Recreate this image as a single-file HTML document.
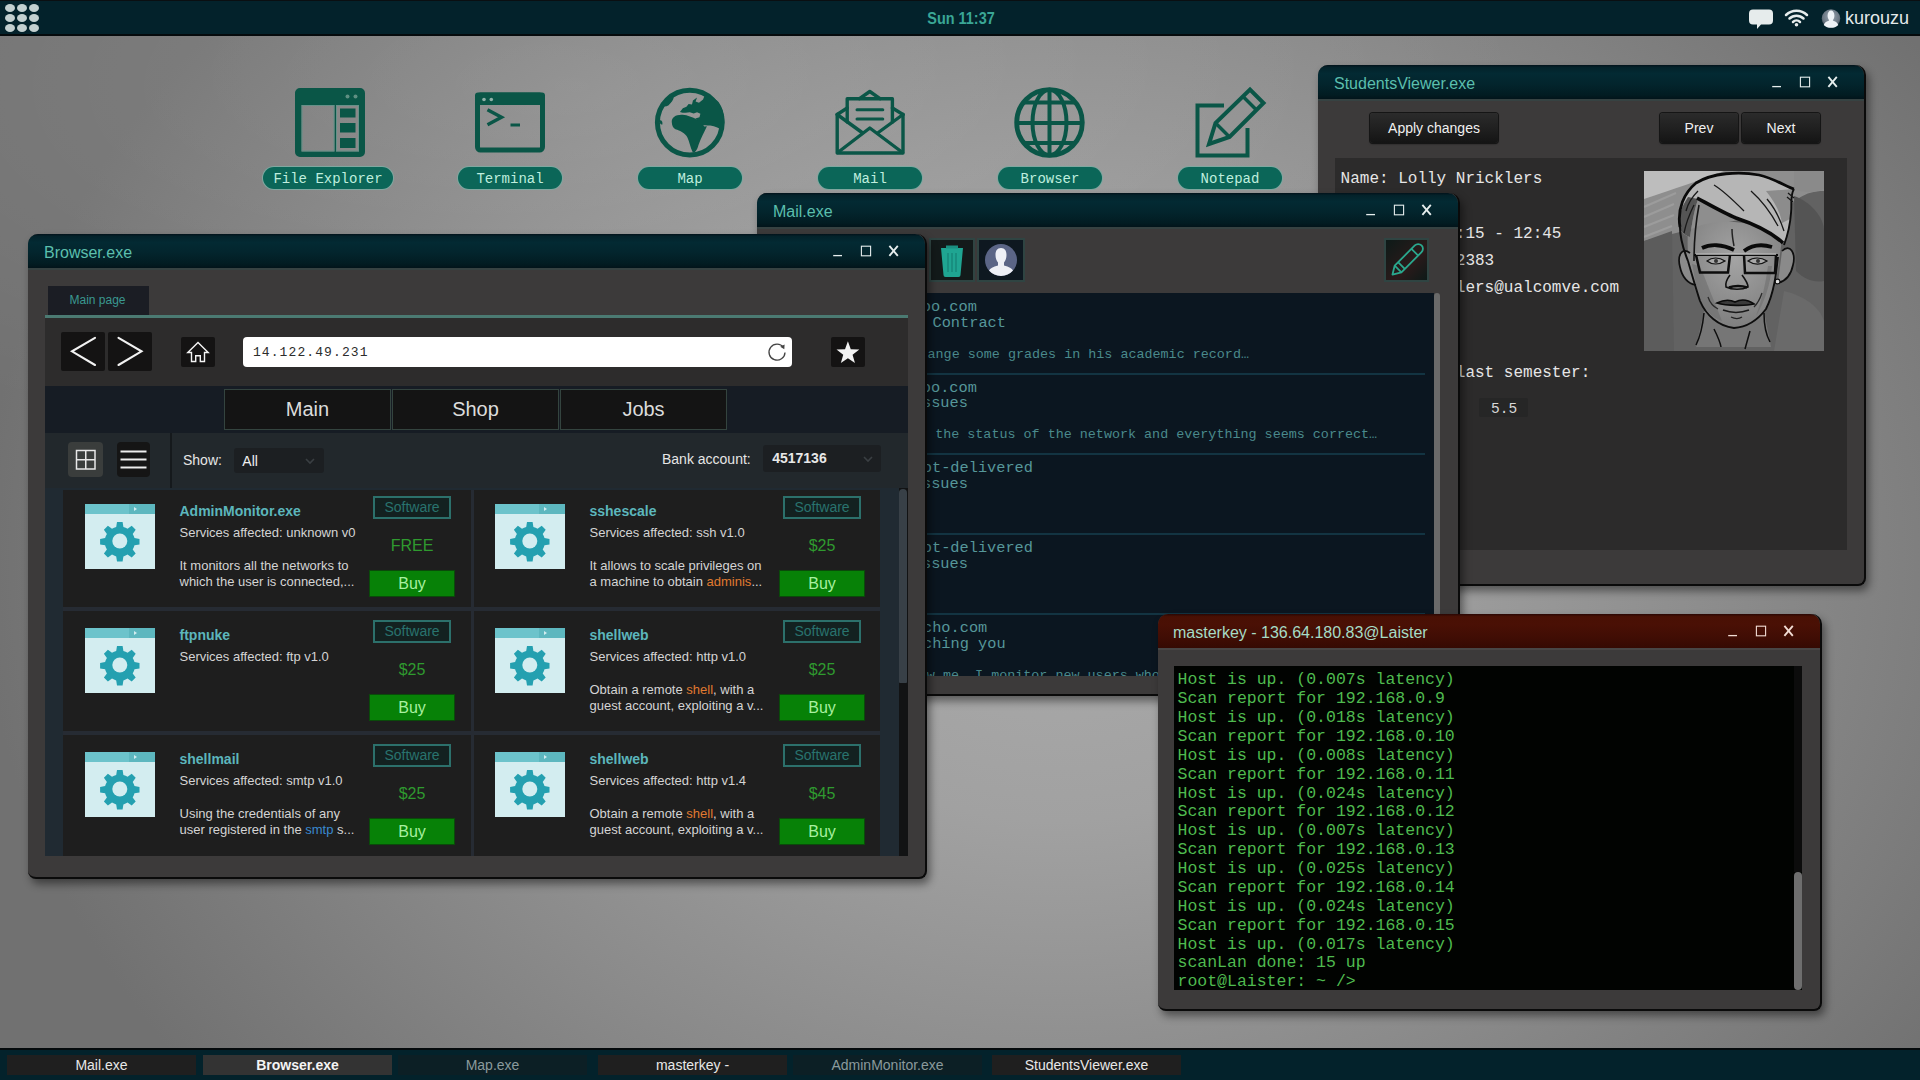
<!DOCTYPE html>
<html><head><meta charset="utf-8">
<style>
*{margin:0;padding:0;box-sizing:border-box}
html,body{width:1920px;height:1080px;overflow:hidden}
body{position:relative;font-family:"Liberation Sans",sans-serif;background:#8c8c8c}
.abs{position:absolute}
#bg{position:absolute;left:0;top:0;width:1920px;height:1080px;
 background:radial-gradient(ellipse 50% 36% at 30% 8%,rgba(255,255,255,.12),rgba(255,255,255,0) 100%),radial-gradient(ellipse 56% 80% at 55% 52%,#ababab 0%,#a1a1a1 30%,#8b8b8b 63%,#717171 100%)}
#topbar{position:absolute;left:0;top:0;width:1920px;height:36px;background:#03222b;border-top:1px solid #0a0f12;border-bottom:2px solid #050a0c}
#taskbar{position:absolute;left:0;top:1048px;width:1920px;height:32px;background:#03222b;border-top:2px solid #050a0c}
.tb{position:absolute;top:4.5px;height:20.5px;width:189px;font-size:14px;line-height:21px;text-align:center;color:#e8e8e8}
.dicon{position:absolute;top:86px;width:72px;height:72px}
.pill{position:absolute;top:167px;height:22px;width:104px;border-radius:11px;background:#0b6658;box-shadow:0 0 0 1px #7fa8a0;
 font-family:"Liberation Mono",monospace;font-size:14px;line-height:24px;text-align:center;color:#bfeede}
.win{position:absolute;background:#3c3a3a;border-radius:10px 10px 8px 8px;border-right:2.5px solid #0a0a0a;border-bottom:2.5px solid #0a0a0a;box-shadow:3px 5px 9px rgba(0,0,0,.45)}
.title{position:absolute;left:0;top:0;right:0;height:34px;border-radius:10px 10px 0 0;
 background:linear-gradient(to bottom,#02121a 0%,#03222a 7%,#032a33 25%,#03252d 55%,#021c22 88%,#02141a 100%);box-shadow:0 2px 0 #364242;
 font-size:16px;color:#5bbfad;line-height:34px;padding-left:16px}
.ctl{position:absolute;top:0;height:34px;color:#e8f0f0}
</style><style>
.btn{border-radius:3px;background:linear-gradient(to bottom,#2b2b2b 0%,#1e1e1e 60%,#141414 100%);box-shadow:0 0 0 1px #151515,0 1px 2px rgba(0,0,0,.6);
 color:#f0f0f0;font-size:14px;line-height:30px;text-align:center}
.mono16{font-family:"Liberation Mono",monospace;font-size:16px;line-height:20px;color:#e6e6e6;white-space:pre}
.card{width:407px;height:113px;background:#1e1e1e}
.ctitle{font-size:14px;font-weight:bold;color:#5cb6bc;line-height:17px;white-space:nowrap}
.ctext{font-size:13px;color:#d4d4d4;line-height:16px;white-space:nowrap}
.tag{width:78px;height:23px;border:2px solid #2c706b;background:#132120;color:#29736e;font-size:14px;line-height:19px;text-align:center}
.price{width:84px;height:22px;font-size:16px;line-height:22px;text-align:center;color:#2f9a2f}
.buy{width:84px;height:25px;background:#078107;box-shadow:0 0 0 1px #0a4a0a;color:#a8f0a0;font-size:16px;line-height:25px;text-align:center}
.nbtn{background:#141313;border-radius:2px}
.navtab{width:167px;height:41px;background:#141414;border:1px solid #34443f;color:#dcdcdc;font-size:20px;line-height:39px;text-align:center}
.term{font-family:"Liberation Mono",monospace;font-size:16.5px;line-height:18.88px;color:#4fba4f;white-space:pre}
.tbtn{background:#131a1a;box-shadow:0 0 0 2px #2f4442}
</style>
</head><body>
<div id="bg"></div>

<!-- TOP BAR -->
<div id="topbar">
 <svg class="abs" style="left:0;top:-1px" width="50" height="36">
  <g fill="#c3d0d0">
   <ellipse cx="10" cy="8" rx="5" ry="4"/><ellipse cx="22" cy="8" rx="5" ry="4"/><ellipse cx="34" cy="8" rx="5" ry="4"/>
   <ellipse cx="10" cy="18" rx="5" ry="4"/><ellipse cx="22" cy="18" rx="5" ry="4"/><ellipse cx="34" cy="18" rx="5" ry="4"/>
   <ellipse cx="10" cy="28" rx="5" ry="4"/><ellipse cx="22" cy="28" rx="5" ry="4"/><ellipse cx="34" cy="28" rx="5" ry="4"/>
  </g>
 </svg>
 <div class="abs" style="left:915px;top:5.5px;width:92px;height:24px;font-size:17px;font-weight:bold;line-height:24px;color:#3aa696;text-align:center;transform:scaleX(0.85)">Sun 11:37</div>
 <svg class="abs" style="left:1740px;top:-1px" width="110" height="36">
  <path d="M13,9.5 h16 a4,4 0 0 1 4,4 v7 a4,4 0 0 1 -4,4 h-8 l-4,4.5 l0,-4.5 h-4 a4,4 0 0 1 -4,-4 v-7 a4,4 0 0 1 4,-4z" fill="#e6ecec"/>
  <g fill="none" stroke="#e6ecec" stroke-width="2.5" stroke-linecap="round">
   <path d="M46,15 a15,15 0 0 1 21,0"/><path d="M49.5,18.5 a10,10 0 0 1 14,0"/><path d="M53,22 a5,5 0 0 1 7,0"/>
  </g>
  <circle cx="56.5" cy="24.8" r="1.8" fill="#e6ecec"/>
  <defs><radialGradient id="ug" cx="50%" cy="40%" r="60%"><stop offset="0" stop-color="#9aa6b2"/><stop offset="0.75" stop-color="#6a7682"/><stop offset="1" stop-color="#3a4650"/></radialGradient></defs>
  <circle cx="91" cy="18.5" r="9.3" fill="url(#ug)"/>
  <path d="M89.2,20.5 c-2.5,0.8 -4.5,1.8 -5.5,4.5 c2,2 4.5,2.8 7.3,2.8 c2.8,0 5.3,-0.8 7.3,-2.8 c-1,-2.7 -3,-3.7 -5.5,-4.5 c1,-1.5 1.6,-3 1.6,-5 c0,-3 -1.4,-5 -3.4,-5 c-2,0 -3.4,2 -3.4,5 c0,2 0.6,3.5 1.6,5z" fill="#eef2f6"/>
 </svg>
 <div class="abs" style="left:1845px;top:5px;font-size:18px;line-height:24px;color:#e4eaea">kurouzu</div>
</div>

<!-- DESKTOP ICONS -->
<svg class="abs" style="left:0;top:0" width="1320" height="200">
 <g fill="#0a5647" stroke="none">
  <!-- file explorer -->
  <path fill-rule="evenodd" d="M300,88 h60 a5,5 0 0 1 5,5 v59 a5,5 0 0 1 -5,5 h-60 a5,5 0 0 1 -5,-5 v-59 a5,5 0 0 1 5,-5z
   M301.5,105 v46.5 h33 v-46.5z M336,105 v46.5 h23 v-46.5z"/>
  <rect x="340" y="108.5" width="15.5" height="9" /><rect x="340" y="123" width="15.5" height="9.5"/><rect x="340" y="138" width="15.5" height="10"/>
  <circle cx="347.5" cy="96.5" r="2" fill="#5f8f82"/><circle cx="355.5" cy="96.5" r="2" fill="#5f8f82"/>
 </g>
 <g fill="none" stroke="#5f948a" stroke-width="1" opacity="0.8">
  <rect x="302" y="105.5" width="32" height="45.5"/><rect x="336.5" y="105.5" width="22" height="45.5"/>
 </g>
 <!-- terminal -->
 <g fill="none" stroke="#0a5647">
  <rect x="477.5" y="95" width="65" height="55" rx="3" stroke-width="5"/>
  <path d="M487.5,109.8 L501.5,117.3 L487.5,124.8" stroke-width="3.4"/>
  <path d="M510.5,125 H520" stroke-width="3"/>
 </g>
 <rect x="475" y="92.5" width="70" height="12.5" rx="3" fill="#0a5647"/>
 <circle cx="484" cy="99.5" r="1.8" fill="#8fb0a8"/><circle cx="491.3" cy="99.5" r="1.8" fill="#8fb0a8"/>
 <!-- map globe -->
 <circle cx="689.8" cy="122.6" r="32.4" fill="none" stroke="#0a5647" stroke-width="5"/>
 <g fill="#0a5647" transform="translate(620,70) scale(0.12038)">
  <path d="M430,432 C428,392 468,368 520,372 C562,376 600,392 640,412 C668,428 688,450 700,470 L722,468 C700,520 672,566 652,622 C642,660 626,688 604,684 C584,642 576,592 560,560 C540,522 500,504 460,492 C440,482 432,462 430,432 Z"/>
  <path d="M498,348 L522,318 L552,306 L570,282 L598,286 L606,254 L640,228 L628,262 L656,272 L690,246 L702,214 C740,214 790,236 820,268 C850,310 866,360 866,420 C866,450 862,480 852,504 C830,484 790,470 750,462 C720,458 700,456 682,462 C668,440 650,420 626,402 L660,392 L668,364 L640,352 L612,362 L580,352 C550,358 520,356 498,348 Z"/>
  <path d="M352,300 C358,262 390,232 442,214 C454,232 434,262 404,292 C388,302 370,306 352,300 Z"/>
  <path d="M328,418 C344,412 356,428 352,452 C340,458 330,448 328,418 Z"/>
 </g>
 <!-- mail -->
 <g fill="none" stroke="#0a5647" stroke-width="3.4" stroke-linejoin="round" stroke-linecap="round">
  <path d="M859.5,98.7 L869.8,91.5 L880,98.7"/>
  <path d="M847.2,122 V98.7 H892.4 V122"/>
  <path d="M857,109.8 H882.8 M857,119 H882.8" stroke-width="3"/>
  <path d="M837.2,114.5 V153 H903 V114.5"/>
  <path d="M837.2,114.5 L847.2,108 M903,114.5 L892.4,108"/>
  <path d="M837.2,114.5 L862,132.5 M903,114.5 L878.3,132.5"/>
  <path d="M837.8,152.5 L869.8,128 L902.5,152.5"/>
 </g>
 <!-- browser globe -->
 <g fill="none" stroke="#0a5647">
  <circle cx="1049.5" cy="122.5" r="32.8" stroke-width="4.8"/>
  <ellipse cx="1049.5" cy="122.5" rx="17" ry="32.8" stroke-width="4"/>
  <path d="M1049.5,90 V155 M1017,123 H1082 M1025,102.5 H1074 M1025,143 H1074" stroke-width="4"/>
 </g>
 <!-- notepad -->
 <g fill="none" stroke="#0a5647" stroke-width="4">
  <path d="M1224,105.5 H1197.5 V155.5 H1247.5 V128"/>
  <path d="M1209,144 L1215.5,123 L1250,89.5 L1263.5,103 L1229.5,137 Z" stroke-linejoin="miter"/>
  <path d="M1215.5,123 L1229.5,137 M1243,96.5 L1256.5,110" stroke-width="3.5"/>
 </g>
</svg>
<div class="pill" style="left:263px;width:130px">File Explorer</div>
<div class="pill" style="left:458px">Terminal</div>
<div class="pill" style="left:638px">Map</div>
<div class="pill" style="left:818px">Mail</div>
<div class="pill" style="left:998px">Browser</div>
<div class="pill" style="left:1178px">Notepad</div>

<div class="win" style="left:1318px;top:65px;width:547.5px;height:520.5px">
<div class="title" style="padding-left:16px;height:34px;line-height:34px"><span style="position:relative;top:1.5px">StudentsViewer.exe</span><svg class="abs" style="left:445px;top:0" width="90" height="34">
 <path d="M9.2,21.6 H18" stroke="#e6eeee" stroke-width="1.3"/>
 <rect x="37.4" y="12.2" width="9.2" height="9.6" fill="none" stroke="#e6eeee" stroke-width="1.1"/>
 <path d="M65.4,11.9 L73.8,21.9 M73.8,11.9 L65.4,21.9" stroke="#e6eeee" stroke-width="1.85"/>
</svg></div>

<div class="abs btn" style="left:52px;top:48px;width:128px;height:30px">Apply changes</div>
<div class="abs btn" style="left:342px;top:48px;width:78px;height:30px">Prev</div>
<div class="abs btn" style="left:424px;top:48px;width:78px;height:30px">Next</div>
<div class="abs" style="left:17px;top:92.5px;width:512px;height:392.5px;background:#2c2b2b"></div>
<div class="abs mono16" style="left:22.6px;top:104px">Name: Lolly Nricklers</div>
<div class="abs mono16" style="left:22.6px;top:159px">Schedule: 12:15 - 12:45</div>
<div class="abs mono16" style="left:22.6px;top:186px">Phone: 555552383</div>
<div class="abs mono16" style="left:22.6px;top:213px">Mail: lnricklers@ualcomve.com</div>
<div class="abs mono16" style="left:22.6px;top:298px">Grades from last semester:</div>
<div class="abs" style="left:161px;top:333px;width:49px;height:19px;background:#262626;border-radius:2px"></div>
<div class="abs" style="left:173px;top:334.5px;font-family:'Liberation Mono',monospace;font-size:14.5px;line-height:19px;color:#d8d8d8">5.5</div>
<svg class="abs" style="left:326px;top:106px" width="180" height="180" viewBox="0 0 180 180">
 <defs>
  <radialGradient id="pface" cx="0.5" cy="0.35" r="0.7">
   <stop offset="0" stop-color="#a4a4a4"/><stop offset="1" stop-color="#7c7c7c"/>
  </radialGradient>
 </defs>
 <rect width="180" height="180" fill="#626262"/>
 <path d="M0,0 H180 V20 C160,20 150,30 140,40 L40,60 L0,70 Z" fill="#8e8e8e"/>
 <path d="M0,0 H80 C60,8 30,18 0,28 Z" fill="#bdbdbd"/>
 <path d="M150,0 H180 V18 C170,22 160,22 150,18 Z" fill="#8a8a8a"/>
 <g stroke="#a8a8a8" stroke-width="2.2" opacity="0.55">
  <path d="M0,36 L32,22 M0,46 L30,33 M0,56 L30,44 M0,66 L28,55 M2,76 L26,66"/>
 </g>
 <path d="M0,70 L28,60 L30,180 H0 Z" fill="#5c5c5c"/>
 <path d="M150,25 C165,30 180,45 180,60 V110 C170,112 160,108 152,100 Z" fill="#545454"/>
 <path d="M140,120 C160,125 175,135 180,150 V180 H130 Z" fill="#6a6a6a"/>
 <!-- neck -->
 <path d="M60,140 L52,176 H127 L120,140 Z" fill="#767676"/>
 <!-- face -->
 <path d="M44,60 C42,90 48,112 56,130 C64,146 76,156 90,157 C106,156 118,146 124,136 C132,118 134,98 138,68 C118,50 70,44 44,60 Z" fill="url(#pface)"/>
 <path d="M44,92 C46,110 52,125 60,136 C66,144 72,148 78,150 C70,130 62,110 56,95 Z" fill="#6e6e6e" opacity="0.6"/>
 <path d="M128,95 C126,115 120,132 112,145 C118,128 122,112 124,95 Z" fill="#6a6a6a" opacity="0.5"/>
 <!-- ears -->
 <path d="M46,82 C38,76 33,84 36,96 C38,106 44,113 52,114" fill="#8a8a8a" stroke="#0e0e0e" stroke-width="1.7"/>
 <path d="M138,80 C146,72 152,82 149,94 C147,104 142,110 134,112" fill="#8a8a8a" stroke="#0e0e0e" stroke-width="1.7"/>
 <circle cx="133.5" cy="110.5" r="2.4" fill="#e0e0e0" stroke="#111" stroke-width="1.1"/>
 <!-- hair -->
 <path d="M35,55 C33,38 40,22 52,12 C68,2 95,0 115,4 C132,8 142,16 150,18 C146,22 148,32 147,42 C146,56 143,66 140,72 C128,62 110,55 92,48 C78,42 64,34 54,28 C50,40 48,52 46,66 C40,64 36,60 35,55 Z" fill="#b6b6b6"/>
 <path d="M54,28 C50,40 48,52 46,66 C40,64 36,60 35,55 C34,45 38,35 44,26 Z" fill="#555"/>
 <path d="M122,20 C130,30 136,40 138,52 L146,48 C146,36 148,26 150,18 Z" fill="#8c8c8c"/>
 <path d="M53,27 C66,34 80,42 92,47 C110,53 126,60 139,72" fill="none" stroke="#0a0a0a" stroke-width="3.6"/>
 <path d="M36,56 C33,38 40,22 52,12 C68,2 95,0 115,4 C132,8 142,16 150,18" fill="none" stroke="#0a0a0a" stroke-width="2.8"/>
 <path d="M150,18 C146,24 148,32 147,42 C146,56 143,66 140,74" fill="none" stroke="#0d0d0d" stroke-width="1.9"/>
 <path d="M36,56 C36,68 40,80 44,90" fill="none" stroke="#0d0d0d" stroke-width="2"/>
 <g fill="none" stroke="#181818" stroke-width="1.3">
  <path d="M107,20 C116,28 126,40 134,55"/><path d="M123,28 C130,36 136,48 140,60"/><path d="M70,14 C80,20 90,30 100,40"/>
  <path d="M42,40 C44,32 48,26 54,20"/><path d="M40,62 C42,52 46,42 50,34"/><path d="M144,22 L150,27 M143,26 L149,31"/>
 </g>
 <path d="M55,34 C52,50 50,70 50,90" fill="none" stroke="#151515" stroke-width="1.6"/>
 <!-- face outline -->
 <path d="M44,90 C48,104 52,118 56,130 C62,144 74,155 90,157 C106,156 116,146 122,138 C130,122 132,104 134,86" fill="none" stroke="#0e0e0e" stroke-width="1.9"/>
 <!-- neck lines -->
 <path d="M60,142 C59,152 57,164 52,174 M120,142 C120,152 121,162 126,171 M70,158 C73,164 76,170 77,176 M106,160 L101,178" fill="none" stroke="#0e0e0e" stroke-width="1.5"/>
 <!-- forehead crease -->
 <path d="M88,58 C88,64 89,70 90,75" fill="none" stroke="#222" stroke-width="1.5"/>
 <!-- brows -->
 <path d="M58,77 C66,73 78,73 90,79" fill="none" stroke="#0a0a0a" stroke-width="3.8"/>
 <path d="M100,80 C108,74 118,73 128,76" fill="none" stroke="#0a0a0a" stroke-width="3.8"/>
 <!-- glasses -->
 <g fill="none" stroke="#0d0d0d">
  <path d="M50,84 H134" stroke-width="1.8"/>
  <path d="M52,84 L56,101.5 H84 L86,84" stroke-width="2.5"/>
  <path d="M100,84 L101,102 H131 L132,84" stroke-width="2.5"/>
 </g>
 <path d="M52,83.2 H132" stroke="#e4e4e4" stroke-width="0.9"/>
 <!-- eyes -->
 <path d="M63,90 C68,86 75,86 81,90 C75,94 68,94 63,90 Z" fill="#a8a8a8" stroke="#111" stroke-width="1.2"/>
 <path d="M104,90 C109,86 117,86 123,90 C117,94 110,94 104,90 Z" fill="#a8a8a8" stroke="#111" stroke-width="1.2"/>
 <circle cx="72" cy="90" r="2" fill="#333"/><circle cx="114" cy="90" r="2" fill="#333"/>
 <!-- nose -->
 <path d="M86,104 C83,108 81,112 82,116 C88,119 98,119 104,116 C104,112 101,108 98,104" fill="none" stroke="#111" stroke-width="1.6"/>
 <path d="M85,116.5 C90,114.5 98,114.5 103,116.5" fill="none" stroke="#0e0e0e" stroke-width="2.6"/>
 <!-- mouth -->
 <path d="M73,132 C81,128 87,129 91,131 C97,128 103,128 110,133 C102,135 83,135 73,132 Z" fill="#3a3a3a" stroke="#0a0a0a" stroke-width="1.6"/>
 <path d="M79,139 C87,142 97,142 105,139" fill="none" stroke="#1a1a1a" stroke-width="1.6"/>
 <path d="M64,126 C66,132 70,136 74,138 M118,122 C116,128 113,133 110,136" fill="none" stroke="#2a2a2a" stroke-width="1.3"/>
 <path d="M87,146 C91,148 95,148 98,146" fill="none" stroke="#222" stroke-width="1.3"/>

</svg>

</div>
<div class="win" style="left:757px;top:193px;width:702.5px;height:502.5px">
<div class="title" style="padding-left:16px;height:34px;line-height:34px"><span style="position:relative;top:1.5px">Mail.exe</span><svg class="abs" style="left:600px;top:0" width="90" height="34">
 <path d="M9.2,21.6 H18" stroke="#e6eeee" stroke-width="1.3"/>
 <rect x="37.4" y="12.2" width="9.2" height="9.6" fill="none" stroke="#e6eeee" stroke-width="1.1"/>
 <path d="M65.4,11.9 L73.8,21.9 M73.8,11.9 L65.4,21.9" stroke="#e6eeee" stroke-width="1.85"/>
</svg></div>

<div class="abs tbtn" style="left:174px;top:47px;width:42px;height:40px">
 <svg class="abs" style="left:8px;top:4px" width="26" height="33" viewBox="0 0 26 33">
  <path d="M2,4 h22 l-2.5,27 a2,2 0 0 1 -2,2 h-13 a2,2 0 0 1 -2,-2z" fill="#1fa592"/>
  <path d="M7,1.5 h12 v3 h-12z" fill="#1a8f80"/>
  <path d="M9,9 v19 M13,9 v19 M17,9 v19" stroke="#178a7c" stroke-width="1.6"/>
 </svg>
</div>
<div class="abs tbtn" style="left:222px;top:47px;width:44px;height:40px;background:#0e1820">
 <svg class="abs" style="left:4px;top:2px" width="36" height="36" viewBox="0 0 36 36">
  <circle cx="18" cy="18" r="16" fill="#5b6586"/>
  <path d="M18,6 c-4,0 -5.5,3 -5.5,7 c0,3 1,5.5 2.5,7.5 l0,3 c-5,1 -8,3 -9,5 a16,16 0 0 0 24,0 c-1,-2 -4,-4 -9,-5 l0,-3 c1.5,-2 2.5,-4.5 2.5,-7.5 c0,-4 -1.5,-7 -5.5,-7z" fill="#eef0f6"/>
 </svg>
</div>
<div class="abs tbtn" style="left:629px;top:47px;width:41px;height:40px;background:linear-gradient(135deg,#0d1a18,#2a1a1a 60%,#0d1a18)">
 <svg class="abs" style="left:2px;top:1px" width="38" height="38" viewBox="0 0 34 34">
  <g fill="none" stroke="#2aa88e" stroke-width="1.6" stroke-linejoin="round">
   <path d="M4,30 L6,22 L24,4 a3.5,3.5 0 0 1 6,6 L12,28 Z"/>
   <path d="M6,22 L12,28 M21,7 L27,13 M9,19 L15,25"/>
  </g>
 </svg>
</div>
<div class="abs" style="left:16px;top:100px;width:661px;height:383px;background:#0b1620;overflow:hidden">
<div class="abs" style="left:0;top:79.5px;width:652px;height:2.5px;background:#133442"></div><div class="abs" style="left:0;top:159.5px;width:652px;height:2.5px;background:#133442"></div><div class="abs" style="left:0;top:239.5px;width:652px;height:2.5px;background:#133442"></div><div class="abs" style="left:0;top:319.5px;width:652px;height:2.5px;background:#133442"></div><div class="abs" style="left:0;top:399.5px;width:652px;height:2.5px;background:#133442"></div><div class="abs" style="left:57.02px;top:6.33px;font-family:'Liberation Mono',monospace;font-size:15.3px;line-height:17.59px;color:#56979a;white-space:pre">hacker@yahoo.com</div><div class="abs" style="left:122.78px;top:22.23px;font-family:'Liberation Mono',monospace;font-size:15.3px;line-height:17.59px;color:#56979a;white-space:pre">Job Contract</div><div class="abs" style="left:-6.20px;top:53.72px;font-family:'Liberation Mono',monospace;font-size:13.4px;line-height:15.41px;color:#4a8a8c;white-space:pre">Hi, I need you to change some grades in his academic record…</div><div class="abs" style="left:66.20px;top:86.53px;font-family:'Liberation Mono',monospace;font-size:15.3px;line-height:17.59px;color:#56979a;white-space:pre">admin@yahoo.com</div><div class="abs" style="left:66.40px;top:102.43px;font-family:'Liberation Mono',monospace;font-size:15.3px;line-height:17.59px;color:#56979a;white-space:pre">Network issues</div><div class="abs" style="left:81.80px;top:133.92px;font-family:'Liberation Mono',monospace;font-size:13.4px;line-height:15.41px;color:#4a8a8c;white-space:pre">I checked the status of the network and everything seems correct…</div><div class="abs" style="left:94.74px;top:166.73px;font-family:'Liberation Mono',monospace;font-size:15.3px;line-height:17.59px;color:#56979a;white-space:pre">Mail not-delivered</div><div class="abs" style="left:66.40px;top:182.63px;font-family:'Liberation Mono',monospace;font-size:15.3px;line-height:17.59px;color:#56979a;white-space:pre">Network issues</div><div class="abs" style="left:94.74px;top:246.93px;font-family:'Liberation Mono',monospace;font-size:15.3px;line-height:17.59px;color:#56979a;white-space:pre">Mail not-delivered</div><div class="abs" style="left:66.40px;top:262.83px;font-family:'Liberation Mono',monospace;font-size:15.3px;line-height:17.59px;color:#56979a;white-space:pre">Network issues</div><div class="abs" style="left:58.22px;top:327.13px;font-family:'Liberation Mono',monospace;font-size:15.3px;line-height:17.59px;color:#56979a;white-space:pre">someone@yacho.com</div><div class="abs" style="left:122.48px;top:343.03px;font-family:'Liberation Mono',monospace;font-size:15.3px;line-height:17.59px;color:#56979a;white-space:pre">Watching you</div><div class="abs" style="left:97.64px;top:374.52px;font-family:'Liberation Mono',monospace;font-size:13.4px;line-height:15.41px;color:#4a8a8c;white-space:pre">You know me. I monitor new users who register</div>
</div>
<div class="abs" style="left:677px;top:100px;width:6px;height:383px;background:#6a6a6a;border-radius:3px"></div>

</div>
<div class="win" style="left:28px;top:234px;width:898.5px;height:644.5px">
<div class="title" style="padding-left:16px;height:34px;line-height:34px"><span style="position:relative;top:1.5px">Browser.exe</span><svg class="abs" style="left:796px;top:0" width="90" height="34">
 <path d="M9.2,21.6 H18" stroke="#e6eeee" stroke-width="1.3"/>
 <rect x="37.4" y="12.2" width="9.2" height="9.6" fill="none" stroke="#e6eeee" stroke-width="1.1"/>
 <path d="M65.4,11.9 L73.8,21.9 M73.8,11.9 L65.4,21.9" stroke="#e6eeee" stroke-width="1.85"/>
</svg></div>
<div class="abs" style="left:17px;top:84px;width:863px;height:538px;background:#2d2c2c"></div><div class="abs" style="left:20px;top:51.5px;width:101px;height:29px;background:#1b1d24;color:#3a9890;font-size:12px;line-height:29px;padding-left:21.5px">Main page</div><div class="abs" style="left:17px;top:81px;width:863px;height:3px;background:#4b7a72"></div><div class="abs nbtn" style="left:33.4px;top:98px;width:44px;height:39px"><svg width="44" height="39"><path d="M34,5.8 L11,19.3 L34,33" fill="none" stroke="#f2f2f2" stroke-width="2.1" stroke-linecap="round"/></svg></div>
<div class="abs nbtn" style="left:80.3px;top:98px;width:44px;height:39px"><svg width="44" height="39"><path d="M10.5,5.8 L33.5,19.3 L10.5,33" fill="none" stroke="#f2f2f2" stroke-width="2.1" stroke-linecap="round"/></svg></div>
<div class="abs nbtn" style="left:153.4px;top:103px;width:34px;height:30px"><svg width="34" height="30"><path d="M6.8,15.5 L17,5.5 L27.2,15.5 H23.5 V24.5 H19.3 V18.7 H14.7 V24.5 H10.5 V15.5 Z" fill="none" stroke="#f4f4f4" stroke-width="1.4"/></svg></div>
<div class="abs" style="left:215.4px;top:103.4px;width:549px;height:30px;background:#fff;border-radius:4px"></div>
<div class="abs" style="left:224.9px;top:111px;font-family:'Liberation Mono',monospace;font-size:13px;line-height:16px;letter-spacing:1.1px;color:#2c2c2c">14.122.49.231</div>
<svg class="abs" style="left:737.5px;top:106.3px" width="22" height="22"><path d="M17.5,7.5 A8,8 0 1 0 19,12.5" fill="none" stroke="#444" stroke-width="1.3"/><path d="M14.2,6.8 L18.6,4.5 L18.3,9.3 Z" fill="#444"/></svg>
<div class="abs nbtn" style="left:802.6px;top:103px;width:34px;height:30px"><svg width="34" height="30"><path d="M16.90,4.30 L19.78,12.34 L28.31,12.59 L21.56,17.81 L23.95,26.01 L16.90,21.20 L9.85,26.01 L12.24,17.81 L5.49,12.59 L14.02,12.34 Z" fill="#f2f2f2"/></svg></div>
<div class="abs" style="left:17px;top:151.5px;width:863px;height:47px;background:#161c24"></div><div class="abs navtab" style="left:196px;top:155px">Main</div><div class="abs navtab" style="left:364px;top:155px">Shop</div><div class="abs navtab" style="left:532px;top:155px">Jobs</div><div class="abs" style="left:17px;top:198.5px;width:863px;height:55.5px;background:#22282c"></div><div class="abs" style="left:40px;top:208px;width:34.5px;height:34.5px;background:#3a3d3c;border-radius:4px"><svg width="35" height="35"><path d="M8.5,8.5 H27 V27 H8.5 Z M17.75,8.5 V27 M8.5,17.75 H27" fill="none" stroke="#e8e8e8" stroke-width="1.5"/></svg></div>
<div class="abs" style="left:89px;top:208px;width:33px;height:34.5px;background:#151515;border-radius:4px"><svg width="33" height="35"><path d="M3.5,9.5 H29.5 M3.5,17.5 H29.5 M3.5,25.5 H29.5" stroke="#ececec" stroke-width="2"/></svg></div>
<div class="abs" style="left:142px;top:198.5px;width:2px;height:55.5px;background:#15191c"></div>
<div class="abs" style="left:155px;top:217px;font-size:14px;line-height:18px;color:#e6e6e6">Show:</div>
<div class="abs" style="left:205.8px;top:213.6px;width:90px;height:25px;background:#1c1f22;border-radius:3px;color:#f0f0f0;font-size:14px;line-height:26px;padding-left:8.5px">All<svg class="abs" style="left:70px;top:8px" width="12" height="10"><path d="M2,3 L6,7 L10,3" fill="none" stroke="#3a3f43" stroke-width="1.6"/></svg></div>
<div class="abs" style="left:634px;top:216px;font-size:14px;line-height:18px;color:#e6e6e6">Bank account:</div>
<div class="abs" style="left:734.7px;top:211.3px;width:118px;height:26.6px;background:#1c1f22;border-radius:3px;color:#e8e8e8;font-size:14px;font-weight:bold;line-height:27px;padding-left:9.5px">4517136<svg class="abs" style="left:99px;top:9px" width="12" height="10"><path d="M2,3 L6,7 L10,3" fill="none" stroke="#3a3f43" stroke-width="1.6"/></svg></div>
<div class="abs" style="left:17px;top:254px;width:863px;height:368px;background:#202a32;overflow:hidden"><div class="abs" style="left:18px;top:2.4px;width:817px;height:366px;background:#1e1e1e"></div><div class="abs" style="left:18px;top:119.4px;width:817px;height:3.3px;background:#262b33"></div><div class="abs" style="left:18px;top:243.4px;width:817px;height:3.3px;background:#262b33"></div><div class="abs" style="left:425.8px;top:2.4px;width:3.2px;height:366px;background:#262b33"></div><div class="abs card" style="left:18px;top:2px;background:none">
 <svg class="abs" style="left:22px;top:14px" width="70" height="65" viewBox="0 0 70 65">
  <rect width="70" height="65" fill="#d3edf0"/>
  <rect width="70" height="10" fill="#6cc3cb"/>
  <rect x="44" width="26" height="10" fill="#5db7bf"/>
  <path d="M49,3 l3,2 l-3,2z" fill="#d3edf0"/>
  <g transform="translate(34.8,37)">
   <path d="M-2.8,-19 h5.6 l0.8,5 a14,14 0 0 1 4.2,1.8 l4.1,-3 l4,4 l-3,4.1 a14,14 0 0 1 1.8,4.2 l5,0.8 v5.6 l-5,0.8 a14,14 0 0 1 -1.8,4.2 l3,4.1 l-4,4 l-4.1,-3 a14,14 0 0 1 -4.2,1.8 l-0.8,5 h-5.6 l-0.8,-5 a14,14 0 0 1 -4.2,-1.8 l-4.1,3 l-4,-4 l3,-4.1 a14,14 0 0 1 -1.8,-4.2 l-5,-0.8 v-5.6 l5,-0.8 a14,14 0 0 1 1.8,-4.2 l-3,-4.1 l4,-4 l4.1,3 a14,14 0 0 1 4.2,-1.8z" fill="#24a0b0"/>
   <circle r="7.5" fill="#d3edf0"/>
  </g>
 </svg>
 <div class="abs ctitle" style="left:116.5px;top:13px">AdminMonitor.exe</div>
 <div class="abs ctext" style="left:116.5px;top:35px">Services affected: unknown v0</div>
 <div class="abs ctext" style="left:116.5px;top:68px;line-height:16px">It monitors all the networks to<br>which the user is connected,...</div>
 <div class="abs tag" style="left:310px;top:6px">Software</div>
 <div class="abs price" style="left:307px;top:45px">FREE</div>
 <div class="abs buy" style="left:307px;top:81px">Buy</div>
</div><div class="abs card" style="left:428px;top:2px;background:none">
 <svg class="abs" style="left:22px;top:14px" width="70" height="65" viewBox="0 0 70 65">
  <rect width="70" height="65" fill="#d3edf0"/>
  <rect width="70" height="10" fill="#6cc3cb"/>
  <rect x="44" width="26" height="10" fill="#5db7bf"/>
  <path d="M49,3 l3,2 l-3,2z" fill="#d3edf0"/>
  <g transform="translate(34.8,37)">
   <path d="M-2.8,-19 h5.6 l0.8,5 a14,14 0 0 1 4.2,1.8 l4.1,-3 l4,4 l-3,4.1 a14,14 0 0 1 1.8,4.2 l5,0.8 v5.6 l-5,0.8 a14,14 0 0 1 -1.8,4.2 l3,4.1 l-4,4 l-4.1,-3 a14,14 0 0 1 -4.2,1.8 l-0.8,5 h-5.6 l-0.8,-5 a14,14 0 0 1 -4.2,-1.8 l-4.1,3 l-4,-4 l3,-4.1 a14,14 0 0 1 -1.8,-4.2 l-5,-0.8 v-5.6 l5,-0.8 a14,14 0 0 1 1.8,-4.2 l-3,-4.1 l4,-4 l4.1,3 a14,14 0 0 1 4.2,-1.8z" fill="#24a0b0"/>
   <circle r="7.5" fill="#d3edf0"/>
  </g>
 </svg>
 <div class="abs ctitle" style="left:116.5px;top:13px">sshescale</div>
 <div class="abs ctext" style="left:116.5px;top:35px">Services affected: ssh v1.0</div>
 <div class="abs ctext" style="left:116.5px;top:68px;line-height:16px">It allows to scale privileges on<br>a machine to obtain <span style="color:#e07a30">adminis</span>...</div>
 <div class="abs tag" style="left:310px;top:6px">Software</div>
 <div class="abs price" style="left:307px;top:45px">$25</div>
 <div class="abs buy" style="left:307px;top:81px">Buy</div>
</div><div class="abs card" style="left:18px;top:126px;background:none">
 <svg class="abs" style="left:22px;top:14px" width="70" height="65" viewBox="0 0 70 65">
  <rect width="70" height="65" fill="#d3edf0"/>
  <rect width="70" height="10" fill="#6cc3cb"/>
  <rect x="44" width="26" height="10" fill="#5db7bf"/>
  <path d="M49,3 l3,2 l-3,2z" fill="#d3edf0"/>
  <g transform="translate(34.8,37)">
   <path d="M-2.8,-19 h5.6 l0.8,5 a14,14 0 0 1 4.2,1.8 l4.1,-3 l4,4 l-3,4.1 a14,14 0 0 1 1.8,4.2 l5,0.8 v5.6 l-5,0.8 a14,14 0 0 1 -1.8,4.2 l3,4.1 l-4,4 l-4.1,-3 a14,14 0 0 1 -4.2,1.8 l-0.8,5 h-5.6 l-0.8,-5 a14,14 0 0 1 -4.2,-1.8 l-4.1,3 l-4,-4 l3,-4.1 a14,14 0 0 1 -1.8,-4.2 l-5,-0.8 v-5.6 l5,-0.8 a14,14 0 0 1 1.8,-4.2 l-3,-4.1 l4,-4 l4.1,3 a14,14 0 0 1 4.2,-1.8z" fill="#24a0b0"/>
   <circle r="7.5" fill="#d3edf0"/>
  </g>
 </svg>
 <div class="abs ctitle" style="left:116.5px;top:13px">ftpnuke</div>
 <div class="abs ctext" style="left:116.5px;top:35px">Services affected: ftp v1.0</div>
 <div class="abs ctext" style="left:116.5px;top:68px;line-height:16px"></div>
 <div class="abs tag" style="left:310px;top:6px">Software</div>
 <div class="abs price" style="left:307px;top:45px">$25</div>
 <div class="abs buy" style="left:307px;top:81px">Buy</div>
</div><div class="abs card" style="left:428px;top:126px;background:none">
 <svg class="abs" style="left:22px;top:14px" width="70" height="65" viewBox="0 0 70 65">
  <rect width="70" height="65" fill="#d3edf0"/>
  <rect width="70" height="10" fill="#6cc3cb"/>
  <rect x="44" width="26" height="10" fill="#5db7bf"/>
  <path d="M49,3 l3,2 l-3,2z" fill="#d3edf0"/>
  <g transform="translate(34.8,37)">
   <path d="M-2.8,-19 h5.6 l0.8,5 a14,14 0 0 1 4.2,1.8 l4.1,-3 l4,4 l-3,4.1 a14,14 0 0 1 1.8,4.2 l5,0.8 v5.6 l-5,0.8 a14,14 0 0 1 -1.8,4.2 l3,4.1 l-4,4 l-4.1,-3 a14,14 0 0 1 -4.2,1.8 l-0.8,5 h-5.6 l-0.8,-5 a14,14 0 0 1 -4.2,-1.8 l-4.1,3 l-4,-4 l3,-4.1 a14,14 0 0 1 -1.8,-4.2 l-5,-0.8 v-5.6 l5,-0.8 a14,14 0 0 1 1.8,-4.2 l-3,-4.1 l4,-4 l4.1,3 a14,14 0 0 1 4.2,-1.8z" fill="#24a0b0"/>
   <circle r="7.5" fill="#d3edf0"/>
  </g>
 </svg>
 <div class="abs ctitle" style="left:116.5px;top:13px">shellweb</div>
 <div class="abs ctext" style="left:116.5px;top:35px">Services affected: http v1.0</div>
 <div class="abs ctext" style="left:116.5px;top:68px;line-height:16px">Obtain a remote <span style="color:#e07a30">shell</span>, with a<br>guest account, exploiting a v...</div>
 <div class="abs tag" style="left:310px;top:6px">Software</div>
 <div class="abs price" style="left:307px;top:45px">$25</div>
 <div class="abs buy" style="left:307px;top:81px">Buy</div>
</div><div class="abs card" style="left:18px;top:250px;background:none">
 <svg class="abs" style="left:22px;top:14px" width="70" height="65" viewBox="0 0 70 65">
  <rect width="70" height="65" fill="#d3edf0"/>
  <rect width="70" height="10" fill="#6cc3cb"/>
  <rect x="44" width="26" height="10" fill="#5db7bf"/>
  <path d="M49,3 l3,2 l-3,2z" fill="#d3edf0"/>
  <g transform="translate(34.8,37)">
   <path d="M-2.8,-19 h5.6 l0.8,5 a14,14 0 0 1 4.2,1.8 l4.1,-3 l4,4 l-3,4.1 a14,14 0 0 1 1.8,4.2 l5,0.8 v5.6 l-5,0.8 a14,14 0 0 1 -1.8,4.2 l3,4.1 l-4,4 l-4.1,-3 a14,14 0 0 1 -4.2,1.8 l-0.8,5 h-5.6 l-0.8,-5 a14,14 0 0 1 -4.2,-1.8 l-4.1,3 l-4,-4 l3,-4.1 a14,14 0 0 1 -1.8,-4.2 l-5,-0.8 v-5.6 l5,-0.8 a14,14 0 0 1 1.8,-4.2 l-3,-4.1 l4,-4 l4.1,3 a14,14 0 0 1 4.2,-1.8z" fill="#24a0b0"/>
   <circle r="7.5" fill="#d3edf0"/>
  </g>
 </svg>
 <div class="abs ctitle" style="left:116.5px;top:13px">shellmail</div>
 <div class="abs ctext" style="left:116.5px;top:35px">Services affected: smtp v1.0</div>
 <div class="abs ctext" style="left:116.5px;top:68px;line-height:16px">Using the credentials of any<br>user registered in the <span style="color:#3a8ad0">smtp</span> s...</div>
 <div class="abs tag" style="left:310px;top:6px">Software</div>
 <div class="abs price" style="left:307px;top:45px">$25</div>
 <div class="abs buy" style="left:307px;top:81px">Buy</div>
</div><div class="abs card" style="left:428px;top:250px;background:none">
 <svg class="abs" style="left:22px;top:14px" width="70" height="65" viewBox="0 0 70 65">
  <rect width="70" height="65" fill="#d3edf0"/>
  <rect width="70" height="10" fill="#6cc3cb"/>
  <rect x="44" width="26" height="10" fill="#5db7bf"/>
  <path d="M49,3 l3,2 l-3,2z" fill="#d3edf0"/>
  <g transform="translate(34.8,37)">
   <path d="M-2.8,-19 h5.6 l0.8,5 a14,14 0 0 1 4.2,1.8 l4.1,-3 l4,4 l-3,4.1 a14,14 0 0 1 1.8,4.2 l5,0.8 v5.6 l-5,0.8 a14,14 0 0 1 -1.8,4.2 l3,4.1 l-4,4 l-4.1,-3 a14,14 0 0 1 -4.2,1.8 l-0.8,5 h-5.6 l-0.8,-5 a14,14 0 0 1 -4.2,-1.8 l-4.1,3 l-4,-4 l3,-4.1 a14,14 0 0 1 -1.8,-4.2 l-5,-0.8 v-5.6 l5,-0.8 a14,14 0 0 1 1.8,-4.2 l-3,-4.1 l4,-4 l4.1,3 a14,14 0 0 1 4.2,-1.8z" fill="#24a0b0"/>
   <circle r="7.5" fill="#d3edf0"/>
  </g>
 </svg>
 <div class="abs ctitle" style="left:116.5px;top:13px">shellweb</div>
 <div class="abs ctext" style="left:116.5px;top:35px">Services affected: http v1.4</div>
 <div class="abs ctext" style="left:116.5px;top:68px;line-height:16px">Obtain a remote <span style="color:#e07a30">shell</span>, with a<br>guest account, exploiting a v...</div>
 <div class="abs tag" style="left:310px;top:6px">Software</div>
 <div class="abs price" style="left:307px;top:45px">$45</div>
 <div class="abs buy" style="left:307px;top:81px">Buy</div>
</div><div class="abs" style="left:853.7px;top:0;width:9.3px;height:368px;background:#121314"></div><div class="abs" style="left:853.7px;top:1px;width:8.5px;height:194px;background:#384047;border-radius:4px 4px 1px 1px"></div></div>
</div>
<div class="win" style="left:1158px;top:614px;width:663.5px;height:396.5px">
<div class="title" style="background:linear-gradient(to bottom,#2a0703 0%,#491004 8%,#4a1005 30%,#400d04 70%,#350a03 100%);box-shadow:0 2px 0 #484646;color:#a6dcc6;padding-left:15px;height:34px;line-height:34px"><span style="position:relative;top:1.5px">masterkey - 136.64.180.83@Laister</span><svg class="abs" style="left:561px;top:0" width="90" height="34">
 <path d="M9.2,21.6 H18" stroke="#f2dcd4" stroke-width="1.3"/>
 <rect x="37.4" y="12.2" width="9.2" height="9.6" fill="none" stroke="#f2dcd4" stroke-width="1.1"/>
 <path d="M65.4,11.9 L73.8,21.9 M73.8,11.9 L65.4,21.9" stroke="#f2dcd4" stroke-width="1.85"/>
</svg></div>
<div class="abs" style="left:16.4px;top:51.7px;width:627.6px;height:324.7px;background:#010301"></div><div class="abs" style="left:635.5px;top:51.7px;width:8.5px;height:206px;background:#0c0c0c"></div><div class="abs" style="left:636px;top:258px;width:7.8px;height:117.6px;background:#6e6e6e;border-radius:4px"></div><div class="abs term" style="left:19.5px;top:57.3px">Host is up. (0.007s latency)
Scan report for 192.168.0.9
Host is up. (0.018s latency)
Scan report for 192.168.0.10
Host is up. (0.008s latency)
Scan report for 192.168.0.11
Host is up. (0.024s latency)
Scan report for 192.168.0.12
Host is up. (0.007s latency)
Scan report for 192.168.0.13
Host is up. (0.025s latency)
Scan report for 192.168.0.14
Host is up. (0.024s latency)
Scan report for 192.168.0.15
Host is up. (0.017s latency)
scanLan done: 15 up
root@Laister: ~ /&gt;</div>
</div>
<!-- TASKBAR -->
<div id="taskbar">
 <div class="tb" style="left:7px;background:#1f1f1f">Mail.exe</div>
 <div class="tb" style="left:203px;background:#333;font-weight:bold;color:#f4f4f4">Browser.exe</div>
 <div class="tb" style="left:398px;background:#0c1f25;color:#8a9a9c">Map.exe</div>
 <div class="tb" style="left:598px;background:#1f1f1f">masterkey -</div>
 <div class="tb" style="left:793px;background:#0c1f25;color:#8a9a9c">AdminMonitor.exe</div>
 <div class="tb" style="left:992px;background:#1f1f1f">StudentsViewer.exe</div>
</div>

</body></html>
